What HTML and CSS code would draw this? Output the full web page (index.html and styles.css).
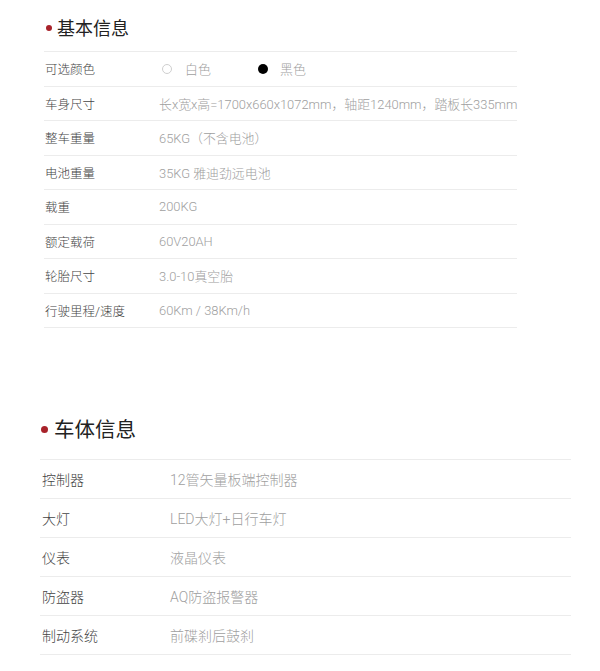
FILE: index.html
```html
<!DOCTYPE html>
<html lang="zh-CN">
<head>
    <meta charset="UTF-8">
    <meta name="viewport" content="width=device-width, initial-scale=1.0">
    <title>参数信息</title>
    <link rel="stylesheet" href="styles.css">
</head>
<body>
    <div class="section basic">
        <h2 class="section-title"><span class="dot"></span>基本信息</h2>
        <div class="spec-table">
            <div class="row">
                <span class="label">可选颜色</span>
                <span class="value colors">
                    <span class="swatch"><i class="radio"></i>白色</span>
                    <span class="swatch"><i class="radio filled"></i>黑色</span>
                </span>
            </div>
            <div class="row"><span class="label">车身尺寸</span><span class="value">长x宽x高=1700x660x1072mm，轴距1240mm，踏板长335mm</span></div>
            <div class="row"><span class="label">整车重量</span><span class="value">65KG（不含电池）</span></div>
            <div class="row"><span class="label">电池重量</span><span class="value">35KG 雅迪劲远电池</span></div>
            <div class="row"><span class="label">载重</span><span class="value">200KG</span></div>
            <div class="row"><span class="label">额定载荷</span><span class="value">60V20AH</span></div>
            <div class="row"><span class="label">轮胎尺寸</span><span class="value">3.0-10真空胎</span></div>
            <div class="row"><span class="label">行驶里程/速度</span><span class="value">60Km / 38Km/h</span></div>
        </div>
    </div>

    <div class="section body-info">
        <h2 class="section-title"><span class="dot"></span>车体信息</h2>
        <div class="spec-table">
            <div class="row"><span class="label">控制器</span><span class="value">12管矢量板端控制器</span></div>
            <div class="row"><span class="label">大灯</span><span class="value">LED大灯+日行车灯</span></div>
            <div class="row"><span class="label">仪表</span><span class="value">液晶仪表</span></div>
            <div class="row"><span class="label">防盗器</span><span class="value">AQ防盗报警器</span></div>
            <div class="row"><span class="label">制动系统</span><span class="value">前碟刹后鼓刹</span></div>
        </div>
    </div>
</body>
</html>
```

FILE: styles.css
```css
body {
    margin: 0;
    padding: 0;
    background: #ffffff;
    font-family: Roboto, "Noto Sans CJK SC", sans-serif;
    color: #333333;
}
.section-title {
    display: flex;
    align-items: center;
    margin: 0;
    font-weight: 400;
    color: #222222;
}
.dot {
    display: inline-block;
    border-radius: 50%;
    background: #a8222a;
}
.spec-table {
    border-bottom: 1px solid #ececec;
}
.row {
    display: flex;
    align-items: center;
    border-top: 1px solid #ececec;
}
.label {
    flex: none;
    color: #444444;
    font-weight: 300;
}
.value {
    color: #a0a0a0;
    font-weight: 300;
    white-space: nowrap;
}

/* 基本信息 */
.basic {
    width: 473px;
    margin-left: 44px;
    padding-top: 8px;
}
.basic .section-title {
    height: 38px;
    font-size: 18px;
    margin-bottom: 5px;
}
.basic .dot {
    width: 6px;
    height: 6px;
    margin: 2px 5px 0 2px;
}
.basic .row {
    height: 33.5px;
    font-size: 12.5px;
}
.basic .value {
    font-size: 12.9px;
}
.basic .label {
    width: 114px;
    padding-left: 1px;
}
.colors {
    display: flex;
    align-items: center;
    padding-left: 3px;
}
.swatch {
    display: flex;
    align-items: center;
    width: 96px;
}
.radio {
    display: inline-block;
    width: 8px;
    height: 8px;
    border: 1px solid #cfcfcf;
    border-radius: 50%;
    margin-right: 13px;
}
.radio.filled {
    width: 10px;
    height: 10px;
    border: none;
    background: #000000;
    margin-right: 12px;
}

/* 车体信息 */
.body-info {
    width: 531px;
    margin-left: 40px;
    margin-top: 80px;
}
.body-info .section-title {
    height: 40px;
    font-size: 20.5px;
    margin-bottom: 11px;
}
.body-info .dot {
    width: 7px;
    height: 7px;
    margin: 2px 6px 0 1px;
}
.body-info .row {
    height: 38px;
    font-size: 14px;
}
.body-info .label {
    width: 128px;
    padding-left: 2px;
}
```
